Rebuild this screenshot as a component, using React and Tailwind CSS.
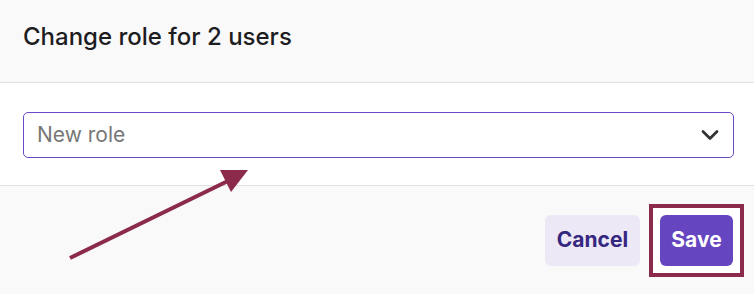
import { ChevronDown } from "lucide-react";

export default function App() {
  return (
    <div className="relative w-[754px] h-[294px] overflow-hidden bg-white font-['Inter',sans-serif]">
      {/* Header */}
      <div className="h-[83px] flex items-center px-[23px] bg-[#f9f9f9] border-b border-[#e1e1e1]">
        <h2 className="text-[24px] font-medium text-[#1d1d1f] -mt-[8px]">
          Change role for 2 users
        </h2>
      </div>

      {/* Body */}
      <div className="h-[103px] px-[23px] pt-[29px] bg-white border-b border-[#e1e1e1]">
        <button className="w-[711px] h-[46px] flex items-center justify-between pl-[13px] pr-[9px] border border-[#6a4bc7] rounded-[5px] bg-white">
          <span className="text-[21px] text-[#777777]">New role</span>
          <ChevronDown size={28} strokeWidth={2.4} className="text-[#333333]" />
        </button>
      </div>

      {/* Footer */}
      <div className="h-[108px] flex items-center justify-end pr-[10px] bg-[#f9f9f9]">
        <button className="w-[95px] h-[51px] rounded-[6px] bg-[#ece8f6] text-[21px] font-bold text-[#35277f]">
          Cancel
        </button>
        <div className="ml-[9px] border-4 border-[#8b2a4b] bg-white p-[7px]">
          <button className="w-[73px] h-[51px] rounded-[6px] bg-[#6645c0] text-[21px] font-bold text-white">
            Save
          </button>
        </div>
      </div>

      {/* Annotation arrow */}
      <svg className="absolute left-0 top-0 pointer-events-none" width="754" height="294">
        <line x1="70" y1="258" x2="232" y2="179" stroke="#8b2a4b" strokeWidth="4" />
        <polygon points="248,170 220,170 231,192" fill="#8b2a4b" />
      </svg>
    </div>
  );
}
